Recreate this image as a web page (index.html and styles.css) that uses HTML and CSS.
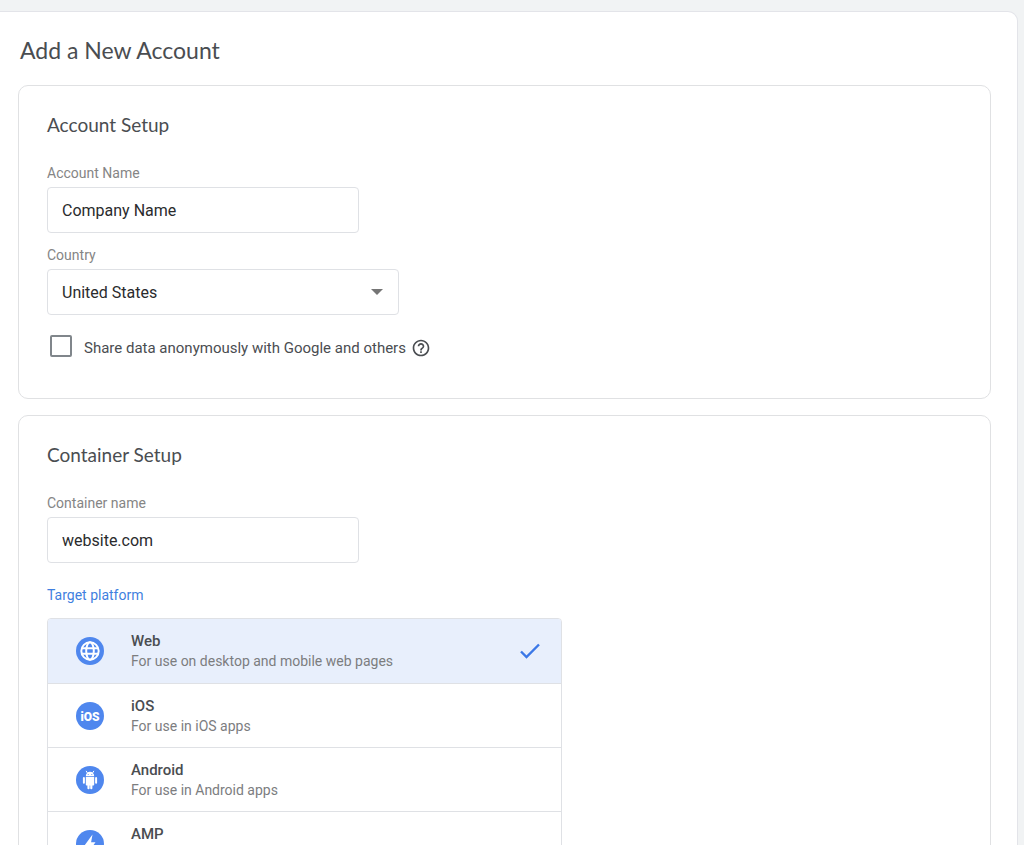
FILE: index.html
```
<!DOCTYPE html>
<html lang="en">
<head>
<meta charset="utf-8">
<meta name="viewport" content="width=device-width, initial-scale=1">
<title>Add a New Account</title>
<link rel="stylesheet" href="styles.css">
</head>
<body>
<main class="panel">
  <h1 class="page-title">Add a New Account</h1>
  <form class="cards">
    <section class="card">
      <h2 class="card-title">Account Setup</h2>
      <div class="field">
        <label class="label" for="account">Account Name</label>
        <input class="control" id="account" type="text" value="Company Name">
      </div>
      <div class="field">
        <label class="label" for="country">Country</label>
        <div class="select-wrap">
          <select class="control select" id="country"><option>United States</option></select>
          <svg class="arrow" viewBox="0 0 12 6" aria-hidden="true"><path d="M0 0h12L6 6z"/></svg>
        </div>
      </div>
      <div class="share">
        <input class="checkbox" id="share" type="checkbox">
        <label for="share">Share data anonymously with Google and others</label>
        <button class="help" type="button" aria-label="Help">
          <svg viewBox="0 0 24 24"><path d="M11 18h2v-2h-2v2zm1-16C6.48 2 2 6.48 2 12s4.480 10 10 10 10-4.480 10-10S17.520 2 12 2zm0 18c-4.410 0-8-3.590-8-8s3.590-8 8-8 8 3.590 8 8-3.590 8-8 8zm0-14c-2.210 0-4 1.790-4 4h2c0-1.100.9-2 2-2s2 .9 2 2c0 2-3 1.750-3 5h2c0-2.250 3-2.500 3-5 0-2.210-1.790-4-4-4z"/></svg>
        </button>
      </div>
    </section>

    <section class="card">
      <h2 class="card-title">Container Setup</h2>
      <div class="field">
        <label class="label" for="container">Container name</label>
        <input class="control" id="container" type="text" value="website.com">
      </div>
      <fieldset class="platforms">
        <legend class="label legend">Target platform</legend>
        <div class="options">
          <label class="option">
            <input class="radio" type="radio" name="platform" checked>
            <svg class="badge" viewBox="0 0 28 28" aria-hidden="true">
              <circle cx="14" cy="14" r="14"/>
              <g class="line"><circle cx="14" cy="14" r="8.700"/><ellipse cx="14" cy="14" rx="3.800" ry="8.700"/><path d="M6 11.200h16M6 16.800h16"/></g>
            </svg>
            <span class="text"><span class="name">Web</span><span class="note">For use on desktop and mobile web pages</span></span>
            <svg class="check" viewBox="0 0 20 16" aria-hidden="true"><path d="M1 8.500l5.500 5.500L19 1.500"/></svg>
          </label>
          <label class="option">
            <input class="radio" type="radio" name="platform">
            <svg class="badge" viewBox="0 0 28 28" aria-hidden="true">
              <circle cx="14" cy="14" r="14"/>
              <text class="badge-text" x="14" y="19" text-anchor="middle">iOS</text>
            </svg>
            <span class="text"><span class="name">iOS</span><span class="note">For use in iOS apps</span></span>
            <svg class="check" viewBox="0 0 20 16" aria-hidden="true"><path d="M1 8.500l5.500 5.500L19 1.500"/></svg>
          </label>
          <label class="option">
            <input class="radio" type="radio" name="platform">
            <svg class="badge" viewBox="0 0 28 28" aria-hidden="true">
              <circle cx="14" cy="14" r="14"/>
              <path class="fill" d="M9.800 10.300a4.200 4.600 0 0 1 8.400 0zM9.800 11h8.400v7.800a.8.8 0 0 1-.8.800h-1v2.600a1.100 1.100 0 0 1-2.200 0v-2.600h-.6v2.600a1.100 1.100 0 0 1-2.200 0v-2.600h-.8a.8.8 0 0 1-.8-.8z"/>
              <path class="arms" d="M7.900 12v4.700M20.100 12v4.700"/>
              <path class="antennae" d="M11.300 6.800l-1-1.600M16.700 6.800l1-1.600"/>
              <circle cx="12.200" cy="8.500" r=".5"/><circle cx="15.800" cy="8.500" r=".5"/>
            </svg>
            <span class="text"><span class="name">Android</span><span class="note">For use in Android apps</span></span>
            <svg class="check" viewBox="0 0 20 16" aria-hidden="true"><path d="M1 8.500l5.500 5.500L19 1.500"/></svg>
          </label>
          <label class="option">
            <input class="radio" type="radio" name="platform">
            <svg class="badge" viewBox="0 0 28 28" aria-hidden="true">
              <circle cx="14" cy="14" r="14"/>
              <path class="fill" d="M16.500 4.500L8.500 15.500h4.500L11.500 23.500l8-11.300h-4.400z"/>
            </svg>
            <span class="text"><span class="name">AMP</span></span>
            <svg class="check" viewBox="0 0 20 16" aria-hidden="true"><path d="M1 8.500l5.500 5.500L19 1.500"/></svg>
          </label>
        </div>
      </fieldset>
    </section>
  </form>
</main>
</body>
</html>
```
FILE: styles.css
```
* { box-sizing: border-box; }

body {
  margin: 0;
  padding: 11px 6px 0 0;
  background: #f1f3f4;
  color: #4a4d51;
  font-family: Roboto, "Liberation Sans", sans-serif;
  font-size: 15px;
}

.panel {
  padding: 20px 26px 24px 18px;
  background: #fff;
  border: 1px solid #e3e4e9;
  border-left: 0;
  border-radius: 0 10px 0 0;
}

.page-title,
.card-title {
  margin: 0;
  color: #4a4d51;
  font-family: Lato, "Open Sans", sans-serif;
  font-weight: 400;
}

.page-title {
  padding-left: 2px;
  font-size: 23px;
  line-height: 36px;
}

.cards {
  display: grid;
  gap: 16px;
  margin-top: 17px;
}

.card {
  padding: 27px 28px 28px;
  border: 1px solid #e0e1e3;
  border-radius: 10px;
}

.card-title {
  margin-bottom: 26px;
  font-size: 19px;
  line-height: 24px;
}

.field {
  display: grid;
  justify-items: start;
  margin-bottom: 12px;
}

.label {
  padding: 0;
  color: #858585;
  font-size: 14px;
  line-height: 20px;
}

.field .label { margin-bottom: 4px; }

.control {
  width: 312px;
  max-width: 100%;
  height: 46px;
  margin: 0;
  padding: 0 14px;
  border: 1px solid #dfe1e5;
  border-radius: 4px;
  background: #fff;
  color: #2a2b2d;
  font-family: inherit;
  font-size: 16px;
}

.select-wrap {
  position: relative;
  width: 352px;
  max-width: 100%;
}

.select {
  display: block;
  width: 100%;
  appearance: none;
}

.arrow {
  position: absolute;
  top: 20px;
  right: 16px;
  width: 12px;
  height: 6px;
  fill: #757575;
  pointer-events: none;
}

.share {
  display: flex;
  align-items: center;
  margin: 20px 0 9px 3px;
  line-height: 24px;
}

.checkbox {
  width: 22px;
  height: 22px;
  margin: 0 12px 4px 0;
  appearance: none;
  border: 2px solid #80868b;
  border-radius: 2px;
}

.checkbox:checked { background: #4285f4; }

.help {
  width: 20px;
  height: 20px;
  margin-left: 5px;
  padding: 0;
  border: 0;
  background: none;
}

.help svg {
  display: block;
  fill: #4a4d51;
}

.platforms {
  margin: 22px 0 0;
  padding: 0;
  border: 0;
}

.legend { color: #3f7fe0; }

.options {
  width: 515px;
  max-width: 100%;
  margin-top: 13px;
  overflow: hidden;
  border: 1px solid #dfe1e5;
  border-radius: 4px;
}

.option {
  position: relative;
  display: flex;
  align-items: center;
  height: 64px;
  padding: 0 21px 0 28px;
}

.option + .option { border-top: 1px solid #dfe1e5; }
.option:has(.radio:checked) { background: #e8effc; }

.radio {
  position: absolute;
  opacity: 0;
}

.badge {
  width: 28px;
  height: 28px;
  margin-right: 27px;
  fill: #4f87ee;
}

.badge .fill,
.badge .badge-text { fill: #fff; }

.badge .badge-text {
  font-size: 12px;
  font-weight: 900;
}

.badge .line,
.badge .arms,
.badge .antennae {
  fill: none;
  stroke: #fff;
  stroke-width: 2;
  stroke-linecap: round;
}

.badge .line { stroke-linecap: butt; }
.badge .antennae { stroke-width: 1; }

.text {
  display: grid;
  flex: 1;
  align-content: start;
  min-height: 40px;
  line-height: 20px;
}

.name { font-weight: 500; }

.note {
  color: #7c7d7f;
  font-size: 14px;
}

.check {
  width: 20px;
  height: 16px;
  visibility: hidden;
  fill: none;
  stroke: #3b78e7;
  stroke-width: 2.4;
}

.radio:checked ~ .check { visibility: visible; }
```
